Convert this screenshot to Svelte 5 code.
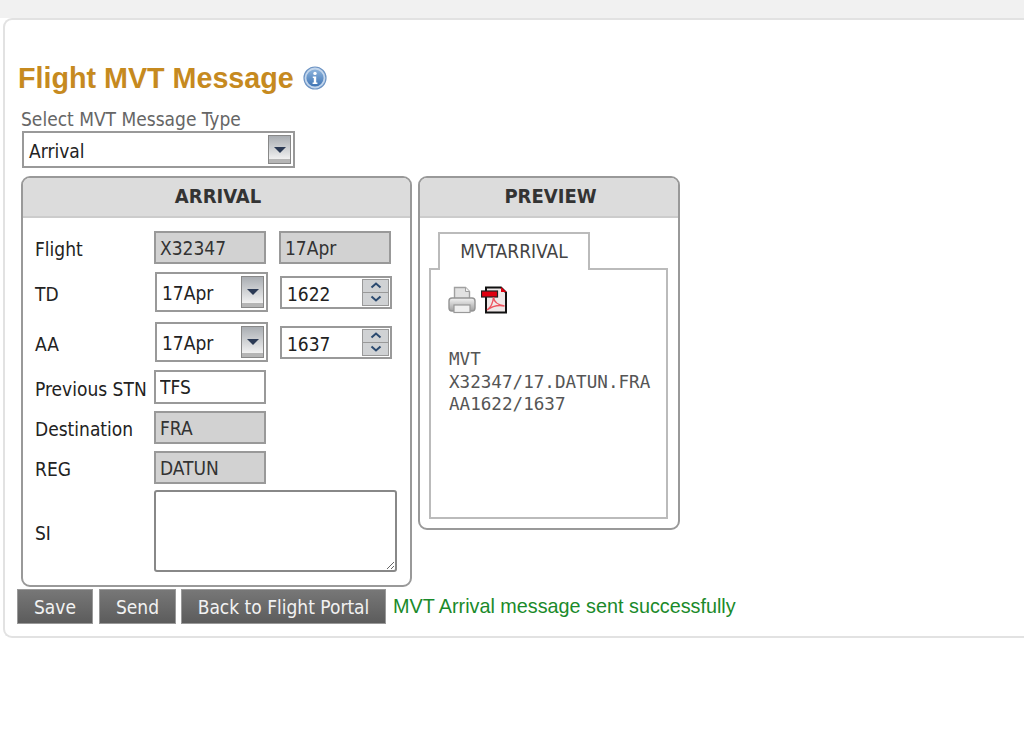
<script>
	let messageType = "Arrival";
	const previewLines = ["MVT", "X32347/17.DATUN.FRA", "AA1622/1637"];
</script>

<div class="page">
	<div class="card">
		<h1>Flight MVT Message
			<svg class="info" viewBox="0 0 24 24" width="24" height="24">
				<defs>
					<linearGradient id="infoFill" x1="0" y1="0" x2="0" y2="1">
						<stop offset="0" stop-color="#8db4dd" />
						<stop offset="1" stop-color="#3f74b4" />
					</linearGradient>
				</defs>
				<circle cx="12" cy="12" r="11" fill="#c3d6ec" stroke="#6d94c4" stroke-width="1.200" />
				<circle cx="12" cy="12" r="8.600" fill="url(#infoFill)" />
				<circle cx="12" cy="7.400" r="1.700" fill="#fff" />
				<path d="M9.800 10.400h3.400v6h1.200v1.600H9.600v-1.600h1.200v-4.400h-1z" fill="#fff" />
			</svg>
		</h1>

		<div class="type-label">Select MVT Message Type</div>
		<div class="combo type-combo">
			<span class="combo-value">{messageType}</span>
			<span class="combo-btn"><i class="caret"></i></span>
		</div>

		<div class="panels">
			<section class="panel arrival">
				<header>ARRIVAL</header>
				<div class="form">
					<div class="row r1">
						<label for="flight">Flight</label>
						<input id="flight" class="field locked" value="X32347" readonly />
						<input class="field locked second" value="17Apr" readonly />
					</div>
					<div class="row r2">
						<span class="lbl">TD</span>
						<div class="combo date-combo">
							<span class="combo-value">17Apr</span>
							<span class="combo-btn"><i class="caret"></i></span>
						</div>
						<div class="spinner">
							<span class="spin-value">1622</span>
							<span class="spin-btns">
								<span><svg viewBox="0 0 12 7" width="12" height="7"><path d="M1.500 5.500 6 1.500l4.500 4" /></svg></span>
								<span><svg viewBox="0 0 12 7" width="12" height="7"><path d="M1.500 1.500 6 5.500l4.500-4" /></svg></span>
							</span>
						</div>
					</div>
					<div class="row r3">
						<span class="lbl">AA</span>
						<div class="combo date-combo">
							<span class="combo-value">17Apr</span>
							<span class="combo-btn"><i class="caret"></i></span>
						</div>
						<div class="spinner">
							<span class="spin-value">1637</span>
							<span class="spin-btns">
								<span><svg viewBox="0 0 12 7" width="12" height="7"><path d="M1.500 5.500 6 1.500l4.500 4" /></svg></span>
								<span><svg viewBox="0 0 12 7" width="12" height="7"><path d="M1.500 1.500 6 5.500l4.500-4" /></svg></span>
							</span>
						</div>
					</div>
					<div class="row r4">
						<label for="stn">Previous STN</label>
						<input id="stn" class="field stn" value="TFS" />
					</div>
					<div class="row r5">
						<label for="dest">Destination</label>
						<input id="dest" class="field locked" value="FRA" readonly />
					</div>
					<div class="row r6">
						<label for="reg">REG</label>
						<input id="reg" class="field locked" value="DATUN" readonly />
					</div>
					<div class="row r7">
						<label for="si">SI</label>
						<textarea id="si"></textarea>
					</div>
				</div>
			</section>

			<section class="panel preview">
				<header>PREVIEW</header>
				<div class="tabs">
					<div class="tab">MVTARRIVAL</div>
					<div class="tab-body">
						<div class="tools">
							<svg viewBox="0 0 28 28" width="28" height="28">
								<defs>
									<linearGradient id="printerBody" x1="0" y1="0" x2="0" y2="1">
										<stop offset="0" stop-color="#f4f4f4" />
										<stop offset="1" stop-color="#a0a0a0" />
									</linearGradient>
								</defs>
								<path d="M6.500 1.500h11l4 4v9h-15z" fill="#e2e2e2" stroke="#a0a0a0" stroke-width="1.400" />
								<path d="M17.500 1.500v4h4" fill="#f4f4f4" stroke="#a0a0a0" />
								<path d="M4 12h20q3 0 3 3v7q0 3-3 3H4q-3 0-3-3v-7q0-3 3-3z" fill="url(#printerBody)" stroke="#949494" stroke-width="1.400" />
								<rect x="6" y="19" width="16" height="7.500" fill="#efefef" stroke="#999" stroke-width="1.200" />
							</svg>
							<svg viewBox="0 0 27 28" width="27" height="28">
								<path d="M5 1.500h15l5 5v20H5z" fill="#efe8e8" stroke="#111" stroke-width="2" />
								<path d="M20 1v5h5.500z" fill="#e00010" />
								<rect x="0.500" y="5" width="16" height="6" fill="#e00010" stroke="#222" stroke-width="1.200" />
								<path d="M6 24c3-2 6-7 6.500-13 .5 5 4 8 11 9-5-1-12 0-17.500 4z" fill="none" stroke="#ee5560" stroke-width="1.400" />
							</svg>
						</div>
						<pre>{previewLines.join("\n")}</pre>
					</div>
				</div>
			</section>
		</div>

		<div class="actions">
			<button class="save">Save</button>
			<button class="send">Send</button>
			<button class="back">Back to Flight Portal</button>
			<span class="status">MVT Arrival message sent successfully</span>
		</div>
	</div>
</div>

<style>
	:global(body) {
		background: #fff;
	}
	.page {
		height: 737px;
		background: linear-gradient(#f1f1f1 18px, #fff 18px);
		padding: 18px 0 0 3px;
		box-sizing: border-box;
		overflow: hidden;
		font-family: "DejaVu Sans", sans-serif;
		font-stretch: condensed;
		font-size: 19px;
		color: #333;
	}
	.card {
		box-sizing: border-box;
		height: 620px;
		background: #fff;
		border: 2px solid #e2e2e2;
		border-right: 0;
		border-radius: 9px 0 0 9px;
		padding: 40px 0 0 13px;
	}
	h1 {
		margin: 0;
		display: flex;
		align-items: center;
		gap: 9px;
		height: 36px;
		font-family: "Liberation Sans", Arial, sans-serif;
		font-stretch: normal;
		font-size: 28.700px;
		font-weight: bold;
		color: #c68a1f;
	}
	.type-label {
		margin: 12px 0 0 3px;
		height: 22px;
		line-height: 22px;
		color: #666;
	}
	.combo {
		box-sizing: border-box;
		display: flex;
		align-items: center;
		background: #fff;
		border: 2px solid #999;
		padding: 2px;
		color: #222;
	}
	.combo-value {
		flex: 1;
		padding: 2px 0 0 3px;
	}
	.combo-btn {
		box-sizing: border-box;
		align-self: stretch;
		width: 23px;
		display: flex;
		align-items: center;
		justify-content: center;
		border: 1px solid #888;
		background: linear-gradient(#a9adb2, #d6d8da 55%, #f0f0f0 85%, #b5b5b5 86%);
	}
	.caret {
		border: 6px solid transparent;
		border-top: 6px solid #2b3a55;
		border-bottom: 0;
	}
	.type-combo {
		width: 273px;
		height: 37px;
		margin: 1px 0 0 4px;
	}
	.panels {
		display: flex;
		align-items: flex-start;
		gap: 6px;
		margin: 8px 0 0 3px;
	}
	.panel {
		box-sizing: border-box;
		border: 2px solid #999;
		border-radius: 9px;
		overflow: hidden;
	}
	.panel header {
		height: 39px;
		line-height: 39px;
		margin: -1px 0 0;
		padding-left: 3px;
		background: #dcdcdc;
		border-bottom: 2px solid #ccc;
		text-align: center;
		font-size: 20px;
		font-weight: bold;
		color: #333;
	}
	.arrival {
		width: 391px;
		height: 411px;
	}
	.preview {
		width: 262px;
		height: 354px;
	}
	.form {
		padding: 13px 0 0 12px;
	}
	.row {
		display: flex;
		align-items: center;
		margin-bottom: 7px;
		color: #222;
	}
	.row label,
	.lbl {
		width: 119px;
		flex: none;
		padding-top: 3px;
	}
	.r1 {
		margin-bottom: 8px;
	}
	.r2 {
		margin-bottom: 10px;
	}
	.r3 {
		margin-bottom: 8px;
	}
	.r6 {
		margin-bottom: 6px;
	}
	.field {
		box-sizing: border-box;
		width: 112px;
		height: 33px;
		border: 2px solid #999;
		padding: 0 4px;
		margin: 0;
		font: inherit;
		font-stretch: condensed;
		color: #222;
		background: #fff;
		border-radius: 0;
		outline: none;
	}
	.field.locked {
		background: #d2d2d2;
		color: #333;
	}
	.field.second {
		margin-left: 13px;
	}
	.field.stn {
		height: 34px;
	}
	.date-combo {
		width: 113px;
		height: 40px;
		margin-left: 1px;
	}
	.spinner {
		box-sizing: border-box;
		display: flex;
		align-items: center;
		width: 112px;
		height: 33px;
		margin-left: 12px;
		border: 2px solid #999;
		background: #fff;
		padding: 1px;
	}
	.spin-value {
		flex: 1;
		padding: 3px 0 0 4px;
	}
	.spin-btns {
		box-sizing: border-box;
		align-self: stretch;
		width: 27px;
		display: flex;
		flex-direction: column;
		gap: 1px;
		background: #999;
		padding: 1px;
	}
	.spin-btns span {
		flex: 1;
		display: flex;
		align-items: center;
		justify-content: center;
		background: #d0d2d4;
	}
	.spin-btns path {
		fill: none;
		stroke: #2b4a70;
		stroke-width: 2;
	}
	textarea {
		box-sizing: border-box;
		display: block;
		width: 243px;
		height: 82px;
		margin: 0;
		border: 2px solid #888;
		border-radius: 3px;
		background: #fff;
	}
	.tabs {
		padding: 14px 0 0 9px;
	}
	.tab {
		box-sizing: border-box;
		position: relative;
		z-index: 1;
		width: 152px;
		height: 38px;
		margin: 0 0 -2px 9px;
		border: 2px solid #bbb;
		border-bottom: 0;
		background: #fff;
		text-align: center;
		line-height: 34px;
		color: #444;
	}
	.tab-body {
		box-sizing: border-box;
		width: 239px;
		height: 251px;
		border: 2px solid #bbb;
		padding: 16px 0 0 17px;
	}
	.tools {
		display: flex;
		gap: 5px;
		height: 28px;
	}
	pre {
		margin: 34px 0 0 1px;
		font-family: "DejaVu Sans Mono", monospace;
		font-stretch: normal;
		font-size: 17.600px;
		line-height: 22.500px;
		color: #555;
	}
	.actions {
		display: flex;
		align-items: center;
		margin: 2px 0 0 -1px;
	}
	button {
		box-sizing: border-box;
		height: 35px;
		border: 1px solid #999;
		padding: 0;
		margin-right: 6px;
		background: linear-gradient(#777, #5c5c5c);
		color: #f2f2f2;
		font: inherit;
		font-stretch: condensed;
		font-weight: normal;
	}
	.save {
		width: 76px;
	}
	.send {
		width: 77px;
		margin-right: 5px;
	}
	.back {
		width: 205px;
		margin-right: 7px;
	}
	.status {
		font-family: "Liberation Sans", Arial, sans-serif;
		font-stretch: normal;
		color: #1a8a2a;
		font-size: 19.800px;
		white-space: nowrap;
	}
</style>
